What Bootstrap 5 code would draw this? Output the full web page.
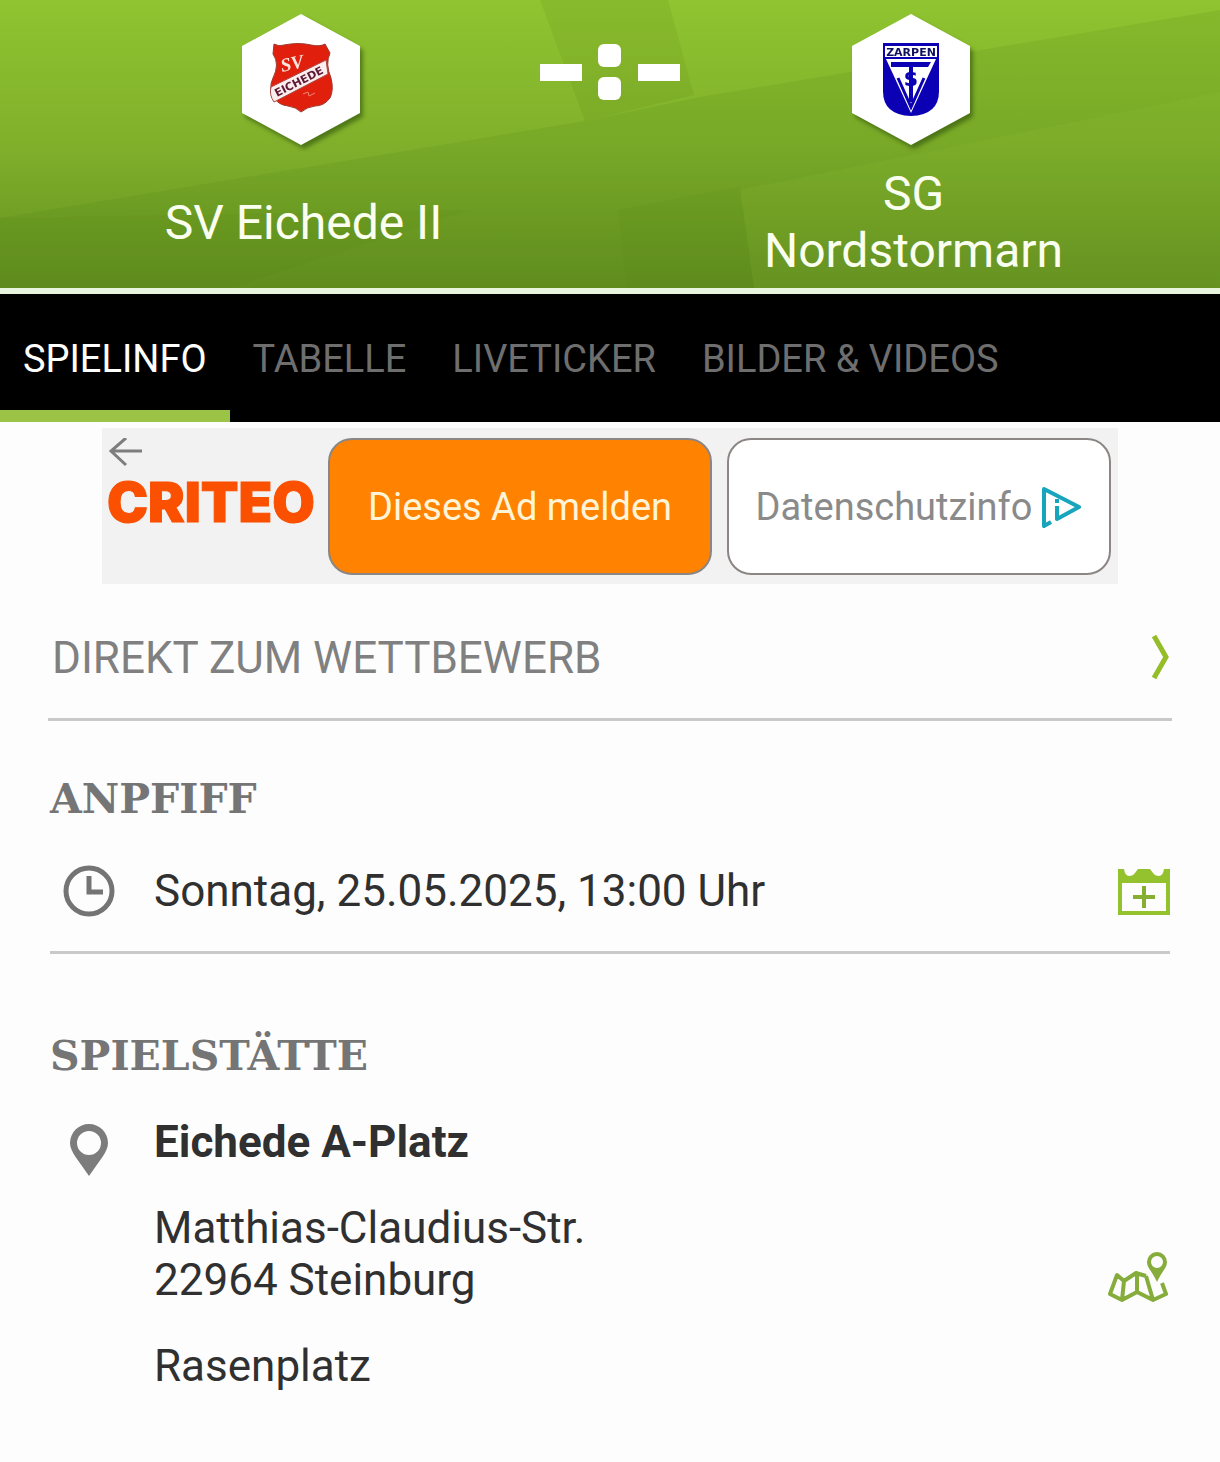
<!DOCTYPE html>
<html lang="de">
<head>
<meta charset="utf-8">
<meta name="viewport" content="width=device-width, initial-scale=1">
<title>SV Eichede II – SG Nordstormarn</title>
<link href="https://cdn.jsdelivr.net/npm/bootstrap@5.3.0/dist/css/bootstrap.min.css" rel="stylesheet">
<style>
  body { font-family: Roboto, "Liberation Sans", sans-serif; font-size: 44px; line-height: 52px; color: #303030; background: #fdfdfd; }
  svg { display: block; flex: none; }
  .match-head { background: #7aac29; border-bottom: 6px solid #e9f4df; height: 294px; padding: 10px 70px 0; }
  .pitch { inset: 0; width: 100%; height: 100%; }
  .team { flex: 1 1 0; }
  .team-name { height: 114px; margin-top: 15px; padding-left: 5px; font-size: 48px; line-height: 57px; color: #fafff0; }
  .crest { filter: drop-shadow(3px 4px 2px rgba(45, 80, 10, .6)); }
  .score { margin-top: 34px; }
  .tabs { background: #000; height: 128px; }
  .tabs .nav-link { font-size: 38px; line-height: 48px; padding: 41px 23px 26px; color: #6e6e6e; border-bottom: 12px solid transparent; border-radius: 0; }
  .tabs .nav-link.active { color: #fff; border-bottom-color: #9bc346; }
  .ad { background: #f2f2f2; width: 1016px; max-width: 100%; height: 156px; margin-top: 6px; padding: 10px 7px 9px 5px; gap: 15px; }
  .ad-brand { width: 206px; }
  .ad-logo { font-family: Inter, sans-serif; font-weight: 900; font-size: 55px; line-height: 68px; color: #fa5000; -webkit-text-stroke: 1px #fa5000; }
  .ad-btn { flex: 1 1 0; font-size: 38px; line-height: 44px; border: 2px solid #8b8683; border-radius: 24px; padding: 0; }
  .ad-report, .ad-report:hover { background: #ff8200; color: #fff4d8; }
  .ad-privacy, .ad-privacy:hover { background: #fff; color: #8a8a8a; }
  .info { padding: 0 50px; }
  .rule { border-bottom: 3px solid #c9c9c9; }
  .to-league { color: #808080; height: 137px; margin: 0 -2px; padding: 13px 2px 0 4px; }
  .slab { font-family: "DejaVu Serif", serif; font-weight: 700; font-size: 41px; line-height: 48px; color: #757575; margin: 0; }
  .kickoff { margin-top: 54px; }
  .venue { margin-top: 78px; }
  .date-row { height: 120px; margin-top: 8px; }
  .lead-icon { width: 104px; padding-left: 12px; }
  .icon-btn { background: none; border: 0; padding: 0; }
  .place { padding-top: 36px; }
  .place p { margin: 0 0 34px; }
  .map-btn { margin-bottom: 36px; }
</style>
<script src="https://cdn.jsdelivr.net/npm/bootstrap@5.3.0/dist/js/bootstrap.bundle.min.js"></script>
</head>
<body>
<header class="match-head position-relative overflow-hidden">
  <svg class="pitch position-absolute" viewBox="0 0 1220 288" preserveAspectRatio="none" aria-hidden="true">
    <defs><linearGradient id="grass" x1="0" y1="0" x2="0" y2="1"><stop offset="0" stop-color="#90c430"/><stop offset=".5" stop-color="#80b02b"/><stop offset="1" stop-color="#638f20"/></linearGradient></defs>
    <path fill="url(#grass)" d="M0 0h1220v288H0z"/>
    <path fill="#4f7d12" fill-opacity=".12" d="M540 0h128l26 95-109 26z"/>
    <path fill="#4f7d12" fill-opacity=".14" d="M0 218L585 121 700 97 1220 10v278H0z"/>
    <path fill="#a5d545" fill-opacity=".09" d="M1220 92L740 190l14 98h466z"/>
    <path fill="#4f7d12" fill-opacity=".08" d="M618 210l122-24 14 102H627z"/>
    <path fill="#4f7d12" fill-opacity=".08" d="M0 218l470-8-240 78H0z"/>
  </svg>
  <div class="d-flex position-relative">
    <div class="team pe-2 text-center">
      <svg class="crest mx-auto" width="126" height="140" viewBox="0 0 126 140" role="img" aria-label="SV Eichede">
        <path fill="#fff" d="M63 4l59 32v67l-59 32-59-32V36z"/>
        <path fill="#e0200d" stroke="#9c3a30" d="M36 34q5 3 10 1 15-3 27 0 9 2 14-1l5 9q-5 11 1 25 3 12-1 20-6 8-15 8-8 1-14 6-5-5-13-6-9-1-14-8-6-10-1-20 7-14 0-24z"/>
        <path fill="#fdeeee" stroke="#a94b48" d="M33 77l55-27 2 14-54 28q-5-7-3-15z"/>
        <text transform="translate(39 87) rotate(-27)" font-family="DejaVu Sans" font-weight="700" font-size="11" fill="#5d1836">EICHEDE</text>
        <text transform="translate(44 62) rotate(-12)" font-family="Liberation Serif" font-style="italic" font-weight="700" font-size="19" fill="#ffe4dc">SV</text>
        <path stroke="#f38577" fill="none" d="M65 84l5-2 1 4 6-3"/>
      </svg>
      <div class="team-name d-flex align-items-center justify-content-center">SV Eichede II</div>
    </div>
    <svg class="score" width="140" height="56" viewBox="0 0 140 56" role="img" aria-label="Noch kein Ergebnis" fill="#fff">
      <path d="M0 20h42v17H0zM98 20h42v17H98z"/><rect x="58" y="0" width="23" height="23" rx="6"/><rect x="58" y="33" width="23" height="23" rx="6"/>
    </svg>
    <div class="team pe-2 text-center">
      <svg class="crest mx-auto" width="126" height="140" viewBox="0 0 126 140" role="img" aria-label="TSV Zarpen">
        <path fill="#fff" d="M63 4l59 32v67l-59 32-59-32V36z"/>
        <path fill="#0b00b4" d="M35 33h56v48q0 24-28 25-28-1-28-25z"/>
        <path fill="#fff" d="M37 36h52v11H37z"/>
        <text x="63" y="46" text-anchor="middle" font-family="DejaVu Sans" font-weight="700" font-size="11" fill="#101060">ZARPEN</text>
        <path fill="#fff" d="M38 49h50L63 103z"/>
        <path fill="#0b00b4" d="M43 52h40l-3 5H43z"/>
        <path fill="none" stroke="#0b00b4" stroke-width="3" d="M50 68l13 29 13-29"/>
        <path stroke="#0b00b4" stroke-width="4" d="M63 55v37"/>
        <text x="63" y="76" text-anchor="middle" font-family="DejaVu Sans" font-weight="700" font-size="20" fill="#0b00b4">S</text>
      </svg>
      <div class="team-name d-flex align-items-center justify-content-center">SG<br>Nordstormarn</div>
    </div>
  </div>
</header>

<nav class="tabs nav flex-nowrap overflow-hidden text-nowrap" aria-label="Spielbereiche">
  <a class="nav-link active" aria-current="page" href="#spielinfo">SPIELINFO</a>
  <a class="nav-link" href="#tabelle">TABELLE</a>
  <a class="nav-link" href="#liveticker">LIVETICKER</a>
  <a class="nav-link" href="#medien">BILDER &amp; VIDEOS</a>
</nav>

<aside class="ad d-flex mx-auto" aria-label="Anzeige">
  <div class="ad-brand">
    <button class="icon-btn d-block" type="button" aria-label="Zurück"><svg width="36" height="30" viewBox="0 0 36 30" fill="none" stroke="#7d7d7d" stroke-width="3"><path d="M35 13H5M19 0L4 13l15 14"/></svg></button>
    <div class="ad-logo">CRITEO</div>
  </div>
  <button class="btn ad-btn ad-report" type="button">Dieses Ad melden</button>
  <button class="btn ad-btn ad-privacy d-flex align-items-center justify-content-center gap-2" type="button">Datenschutzinfo
    <svg width="42" height="42" viewBox="0 0 42 42" fill="none" stroke="#16a5bd" stroke-width="4" stroke-linejoin="round"><path d="M11 36l-7 4V3l35 18-22 12V20M17 13v4"/></svg>
  </button>
</aside>

<main class="info" id="spielinfo">
  <a class="to-league rule d-flex align-items-center justify-content-between text-decoration-none" href="#wettbewerb">DIREKT ZUM WETTBEWERB
    <svg width="20" height="46" viewBox="0 0 20 46" fill="none" stroke="#94bd28" stroke-width="5"><path d="M4 1l12 21L4 43"/></svg>
  </a>

  <section class="kickoff">
    <h2 class="slab">ANPFIFF</h2>
    <div class="date-row d-flex align-items-center">
      <div class="lead-icon"><svg width="54" height="54" viewBox="0 0 54 54" fill="none" stroke="#747474" stroke-width="5"><circle cx="27" cy="27" r="23"/><path d="M27 12v16h14"/></svg></div>
      <div class="flex-grow-1">Sonntag, 25.05.2025, 13:00 Uhr</div>
      <button class="icon-btn" type="button" aria-label="Zum Kalender hinzufügen"><svg width="52" height="47" viewBox="0 0 52 47"><path fill="#94c12e" fill-rule="evenodd" d="M0 1h6q1 7 5 7t6-3l3-4h12l3 4q2 3 6 3t5-7h6v46H0zM4 15v28h44V15z"/><path stroke="#86af32" stroke-width="4" d="M26 18v22M15 29h22"/></svg></button>
    </div>
    <div class="rule"></div>
  </section>

  <section class="venue">
    <h2 class="slab">SPIELSTÄTTE</h2>
    <div class="place d-flex">
      <div class="lead-icon pt-2"><svg width="54" height="52" viewBox="0 0 54 52"><path fill="#7c7c7c" fill-rule="evenodd" d="M27 0a19 19 0 0 1 19 19c0 9-9 18-19 33C17 37 8 28 8 19A19 19 0 0 1 27 0zm0 7a12 12 0 1 0 0 24 12 12 0 0 0 0-24z"/></svg></div>
      <div class="flex-grow-1">
        <p class="fw-bold">Eichede A-Platz</p>
        <div class="d-flex justify-content-between align-items-end">
          <p>Matthias-Claudius-Str.<br>22964 Steinburg</p>
          <button class="icon-btn map-btn" type="button" aria-label="Auf Karte anzeigen"><svg width="62" height="52" viewBox="0 0 62 52" fill="none" stroke="#86ad3c" stroke-width="4" stroke-linejoin="round"><path d="M38 24l-10-3-12 8-7-6-7 19 12 6 15-8 16 8 13-6-4-11M16 29l-2 19M29 22v18M38 24l7 24"/><path fill="#86ad3c" fill-rule="evenodd" stroke="none" d="M49 0a10 10 0 0 1 10 10c0 6-5 9-10 20-5-11-10-14-10-20A10 10 0 0 1 49 0zm0 4a6 6 0 1 0 0 12 6 6 0 0 0 0-12z"/></svg></button>
        </div>
        <p>Rasenplatz</p>
      </div>
    </div>
  </section>
</main>
</body>
</html>
